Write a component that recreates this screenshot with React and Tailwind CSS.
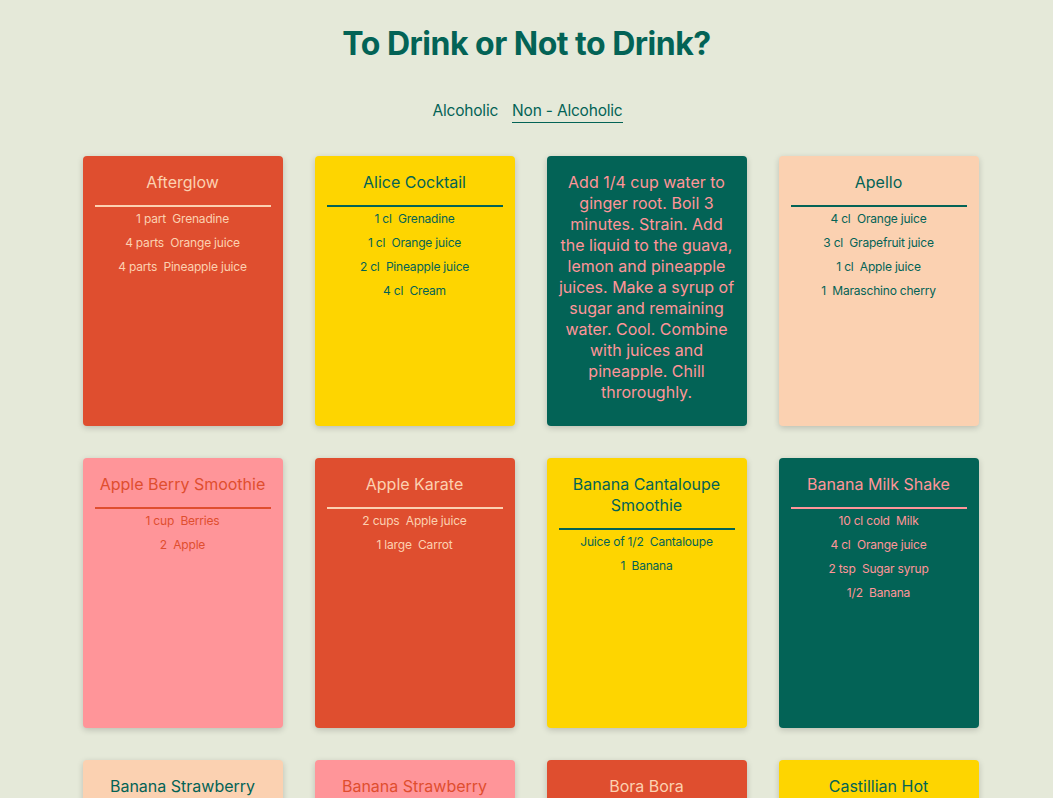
import React from "react";

const themes = {
  red: { card: "bg-[#df4e2f] text-[#fcd1b1]", line: "border-[#fcd1b1]" },
  yellow: { card: "bg-[#fed500] text-[#036356]", line: "border-[#036356]" },
  green: { card: "bg-[#036356] text-[#ff9599]", line: "border-[#ff9599]" },
  peach: { card: "bg-[#fbd1b1] text-[#036356]", line: "border-[#036356]" },
  pink: { card: "bg-[#ff9599] text-[#df4e2f]", line: "border-[#df4e2f]" },
};

const drinks = [
  { name: "Afterglow", theme: "red", items: ["1 part  Grenadine", "4 parts  Orange juice", "4 parts  Pineapple juice"] },
  { name: "Alice Cocktail", theme: "yellow", items: ["1 cl  Grenadine", "1 cl  Orange juice", "2 cl  Pineapple juice", "4 cl  Cream"] },
  {
    name: "Aloha Fruit Punch",
    theme: "green",
    text: "Add 1/4 cup water to ginger root. Boil 3 minutes. Strain. Add the liquid to the guava, lemon and pineapple juices. Make a syrup of sugar and remaining water. Cool. Combine with juices and pineapple. Chill throroughly.",
  },
  { name: "Apello", theme: "peach", items: ["4 cl  Orange juice", "3 cl  Grapefruit juice", "1 cl  Apple juice", "1  Maraschino cherry"] },
  { name: "Apple Berry Smoothie", theme: "pink", items: ["1 cup  Berries", "2  Apple"] },
  { name: "Apple Karate", theme: "red", items: ["2 cups  Apple juice", "1 large  Carrot"] },
  { name: "Banana Cantaloupe Smoothie", theme: "yellow", items: ["Juice of 1/2  Cantaloupe", "1  Banana"] },
  { name: "Banana Milk Shake", theme: "green", items: ["10 cl cold  Milk", "4 cl  Orange juice", "2 tsp  Sugar syrup", "1/2  Banana"] },
  { name: "Banana Strawberry Shake", theme: "peach", items: ["1  Banana", "1 cup  Strawberries"] },
  { name: "Banana Strawberry Shake Daiquiri", theme: "pink", items: ["1  Banana", "1 cup  Strawberries"] },
  { name: "Bora Bora", theme: "red", items: ["10 cl  Pineapple juice", "6 cl  Passion fruit juice"] },
  { name: "Castillian Hot Chocolate", theme: "yellow", items: ["1/2 cup  Cocoa powder", "1 cup  Sugar"] },
];

function Card({ d }) {
  const t = themes[d.theme];
  return (
    <div className={`h-[270px] w-[200px] rounded-[4px] px-3 pt-[16px] shadow-[0_2px_6px_rgba(0,0,0,0.18)] ${t.card}`}>
      {d.text ? (
        <p className="text-center text-[16px] leading-[21px]">{d.text}</p>
      ) : (
        <>
          <h2 className={`border-b-2 pb-[12px] text-center text-[16px] leading-[21px] ${t.line}`}>{d.name}</h2>
          <ul className="text-center text-[12px] leading-[24px] whitespace-pre tracking-[-0.2px]">
            {d.items.map((i) => (
              <li key={i}>{i}</li>
            ))}
          </ul>
        </>
      )}
    </div>
  );
}

export default function App() {
  return (
    <div className="min-h-screen bg-[#e5e9d9] pb-10 text-[#036356]" style={{ fontFamily: "Inter, 'Liberation Sans', sans-serif" }}>
      <h1 className="pt-[24px] text-center text-[32px] font-bold leading-[40px] tracking-[-0.5px]">To Drink or Not to Drink?</h1>
      <nav className="mt-[37px] flex justify-center gap-[14px] pl-[2px] text-[15.5px] leading-[20px] tracking-[-0.2px]">
        <a className="pb-[1px]">Alcoholic</a>
        <a className="border-b border-[#036356] pb-[1px]">Non - Alcoholic</a>
      </nav>
      <div className="mt-[33px] flex justify-center pl-[8px]">
        <div className="grid grid-cols-[repeat(4,200px)] gap-[32px]">
          {drinks.map((d) => (
            <Card key={d.name} d={d} />
          ))}
        </div>
      </div>
    </div>
  );
}
